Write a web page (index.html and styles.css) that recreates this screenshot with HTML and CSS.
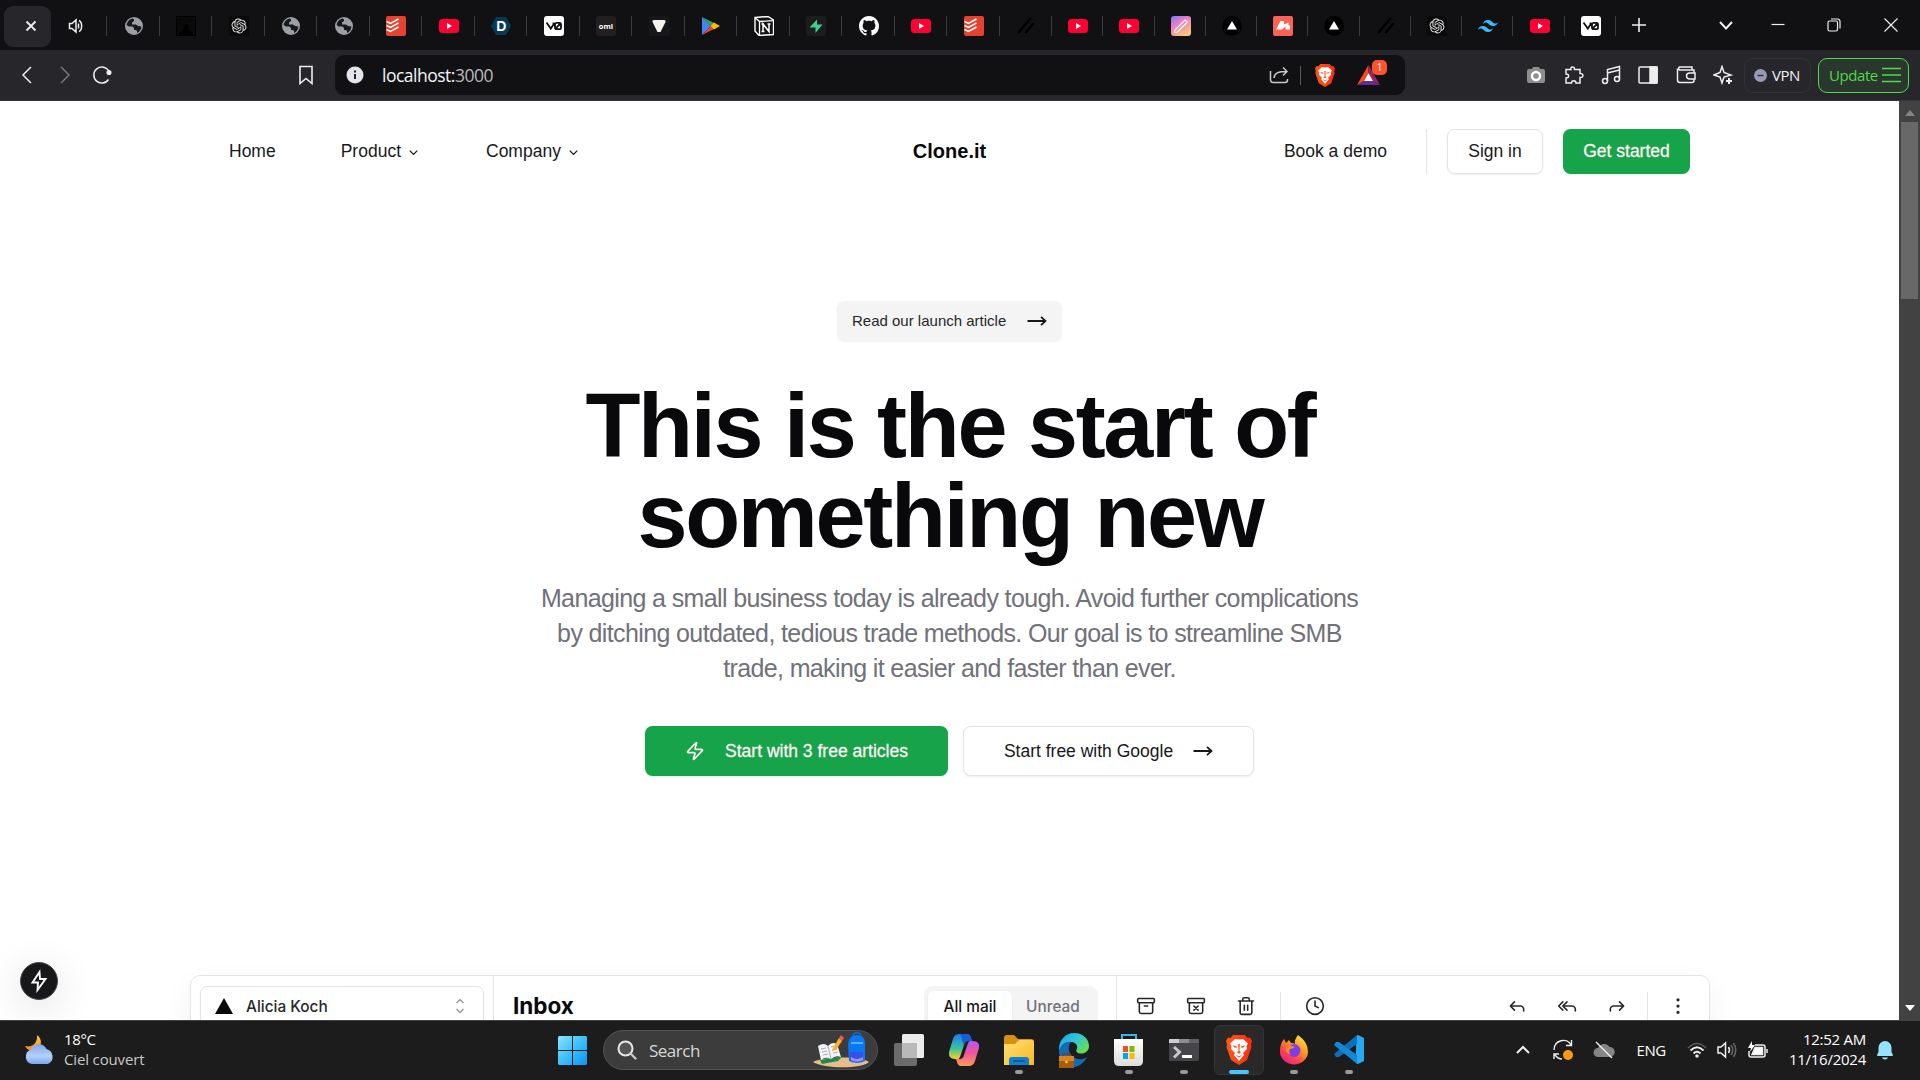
FILE: index.html
```html
<!DOCTYPE html>
<html lang="en">
<head>
<meta charset="utf-8">
<title>Clone.it</title>
<link rel="stylesheet" href="styles.css">
</head>
<body>
<svg class="sprite" width="0" height="0" aria-hidden="true">
  <defs>
    <linearGradient id="g-pen" x1="0" y1="0" x2=".6" y2="1"><stop offset="0" stop-color="#7a7bff"/><stop offset=".45" stop-color="#ef7fc0"/><stop offset="1" stop-color="#fdc27c"/></linearGradient>
    <linearGradient id="g-brave" x1="0" x2="1"><stop offset="0" stop-color="#ff5a12"/><stop offset="1" stop-color="#ff2a10"/></linearGradient>
    <linearGradient id="g-win" x1="0" y1="0" x2="1" y2="1"><stop offset="0" stop-color="#8be3ff"/><stop offset=".5" stop-color="#3cc0fb"/><stop offset="1" stop-color="#0a93f5"/></linearGradient>
    <linearGradient id="g-folder" x1="0" y1="0" x2="1" y2="1"><stop offset="0" stop-color="#ffe07a"/><stop offset="1" stop-color="#fcb81c"/></linearGradient>
    <linearGradient id="g-edge" x1="0" y1="0" x2="1" y2=".7"><stop offset="0" stop-color="#1d9ee0"/><stop offset=".5" stop-color="#2fc4df"/><stop offset="1" stop-color="#68e04a"/></linearGradient>
    <linearGradient id="g-cop1" x1="0" y1="0" x2="0" y2="1"><stop offset="0" stop-color="#1c7df0"/><stop offset=".55" stop-color="#35bfa5"/><stop offset="1" stop-color="#f5d523"/></linearGradient>
    <linearGradient id="g-cop2" x1="0" y1="0" x2="0" y2="1"><stop offset="0" stop-color="#b059ef"/><stop offset=".5" stop-color="#f2569a"/><stop offset="1" stop-color="#ff9b55"/></linearGradient>
    <linearGradient id="g-fox" x1=".9" y1="0" x2=".2" y2="1"><stop offset="0" stop-color="#fff04a"/><stop offset=".4" stop-color="#ff9a20"/><stop offset=".75" stop-color="#ff3b55"/><stop offset="1" stop-color="#e0208c"/></linearGradient>
    <linearGradient id="g-cloud" x1="0" y1="0" x2="0" y2="1"><stop offset="0" stop-color="#7fa6ee"/><stop offset=".6" stop-color="#b5d0fb"/><stop offset="1" stop-color="#7ba6ef"/></linearGradient>
    <linearGradient id="g-moon" x1="0" y1="0" x2="0" y2="1"><stop offset="0" stop-color="#ffcf3a"/><stop offset="1" stop-color="#ef8a1e"/></linearGradient>
    <linearGradient id="g-store" x1="0" y1="0" x2="0" y2="1"><stop offset="0" stop-color="#fff"/><stop offset="1" stop-color="#dcdcdc"/></linearGradient>
  </defs>
  <symbol id="globe" viewBox="0 0 20 20"><circle cx="10" cy="10" r="9" fill="#9aa0a6"/><path d="M9 2.600C5.600 3 3 5.700 2.700 9.200L5 10.500H8.500L10 12V14H12L13 15V17C15.500 16 17.300 13.500 17.400 10.500L14 10L12 8.500H8V6.500L10 5V3.500Z" fill="#17181b"/><path d="M11 3.500V6L9.500 7.500H13L15 9H17" fill="#9aa0a6"/></symbol>
  <symbol id="openai" viewBox="0 0 24 24"><rect width="24" height="24" rx="3" fill="#0a0a0a"/><g transform="translate(3 3) scale(.75)"><path fill="#e8e8e8" d="M22.2819 9.8211a5.9847 5.9847 0 0 0-.5157-4.9108 6.0462 6.0462 0 0 0-6.5098-2.9A6.0651 6.0651 0 0 0 4.9807 4.1818a5.9847 5.9847 0 0 0-3.9977 2.9 6.0462 6.0462 0 0 0 .7427 7.0966 5.98 5.98 0 0 0 .511 4.9107 6.051 6.051 0 0 0 6.5146 2.9001A5.9847 5.9847 0 0 0 13.2599 24a6.0557 6.0557 0 0 0 5.7718-4.2058 5.9894 5.9894 0 0 0 3.9977-2.9001 6.0557 6.0557 0 0 0-.7475-7.0729zm-9.022 12.6081a4.4755 4.4755 0 0 1-2.8764-1.0408l.1419-.0804 4.7783-2.7582a.7948.7948 0 0 0 .3927-.6813v-6.7369l2.02 1.1686a.071.071 0 0 1 .038.052v5.5826a4.504 4.504 0 0 1-4.4945 4.4944zm-9.6607-4.1254a4.4708 4.4708 0 0 1-.5346-3.0137l.142.0852 4.783 2.7582a.7712.7712 0 0 0 .7806 0l5.8428-3.3685v2.3324a.0804.0804 0 0 1-.0332.0615L9.74 19.9502a4.4992 4.4992 0 0 1-6.1408-1.6464zM2.3408 7.8956a4.485 4.485 0 0 1 2.3655-1.9728V11.6a.7664.7664 0 0 0 .3879.6765l5.8144 3.3543-2.0201 1.1685a.0757.0757 0 0 1-.071 0l-4.8303-2.7865A4.504 4.504 0 0 1 2.3408 7.872zm16.5963 3.8558L13.1038 8.364 15.1192 7.2a.0757.0757 0 0 1 .071 0l4.8303 2.7913a4.4944 4.4944 0 0 1-.6765 8.1042v-5.6772a.79.79 0 0 0-.407-.667zm2.0107-3.0231l-.142-.0852-4.7735-2.7818a.7759.7759 0 0 0-.7854 0L9.409 9.2297V6.8974a.0662.0662 0 0 1 .0284-.0615l4.8303-2.7866a4.4992 4.4992 0 0 1 6.6802 4.66zM8.3065 12.863l-2.02-1.1638a.0804.0804 0 0 1-.038-.0567V6.0742a4.4992 4.4992 0 0 1 7.3757-3.4537l-.142.0805L8.704 5.459a.7948.7948 0 0 0-.3927.6813zm1.0976-2.3654l2.602-1.4998 2.6069 1.4998v2.9994l-2.5974 1.4997-2.6067-1.4997Z"/></g></symbol>
  <symbol id="todoist" viewBox="0 0 20 20"><rect width="20" height="20" rx="2" fill="#e44332"/><path d="M0 6.500L4 8.500L12 4M0 10.500L4 12.500L12 8M0 14.500L4 16.500L12 12" transform="translate(.5 -1)" fill="none" stroke="#fff" stroke-width="1.500"/></symbol>
  <symbol id="youtube" viewBox="0 0 20 20"><rect y="3" width="20" height="14" rx="3.500" fill="#ff0033"/><path d="M8 7V13L13 10Z" fill="#fff"/></symbol>
  <symbol id="v0" viewBox="0 0 20 20"><rect width="20" height="20" rx="3" fill="#fff"/><path d="M2.500 6.500L6.800 12.600L9.500 8.500V6.500M12 6.800H15.500A1.500 1.500 0 0 1 17 8.300V11.700A1.500 1.500 0 0 1 15.500 13.200H12.500A1.500 1.500 0 0 1 11 11.700V8.300A1.500 1.500 0 0 1 12.500 6.800M11.300 12.800L16.700 7.200" fill="none" stroke="#111" stroke-width="1.800"/></symbol>
  <symbol id="vercel" viewBox="0 0 20 20"><circle cx="10" cy="10" r="10" fill="#000"/><path d="M10 5L15 13.500H5Z" fill="#fff"/></symbol>
  <symbol id="slashes" viewBox="0 0 20 20"><path d="M3 16L14 3M10 16L17 8" stroke="#000" stroke-width="2.500" stroke-linecap="round"/></symbol>
  <symbol id="brave" viewBox="0 0 26 30"><path d="M7 0H19L21.500 3L24 2.500L26 6L25 9L25.500 12L21 25L13 30L5 25L.5 12L1 9L0 6L2 2.500L4.500 3Z" fill="url(#g-brave)"/><path d="M13 4.500L17 4L22 8.500L20.500 11L21 14L17 18L18 20L13 26L8 20L9 18L5 14L5.500 11L4 8.500L9 4Z" fill="#fff"/><path d="M7 10.300L11 11.500L10.700 12.800L8 12.200ZM19 10.300L15 11.500L15.300 12.800L18 12.200ZM12.200 9H13.800L13.500 16L15 17.500L13 18.700L11 17.500L12.500 16ZM9.500 20L13 21.300L16.500 20L13 22.500Z" fill="#ff4a18"/></symbol>
  <symbol id="zap" viewBox="0 0 24 24"><path d="M4 14a1 1 0 0 1-.78-1.63l9.900-10.200a.5.5 0 0 1 .86.46l-1.920 6.020A1 1 0 0 0 13 10h7a1 1 0 0 1 .78 1.630l-9.900 10.200a.5.5 0 0 1-.86-.46l1.920-6.020A1 1 0 0 0 11 14z"/></symbol>
  <symbol id="chev" viewBox="0 0 24 24"><path d="m6 9 6 6 6-6"/></symbol>
  <symbol id="arrow" viewBox="0 0 20 12"><path d="M.5 6H18.500M14 1.800L18.500 6L14 10.200"/></symbol>
</svg>

<header class="browser">
  <div class="tabs">
    <div class="tab-active"><svg width="12" height="12" viewBox="0 0 12 12" class="ln"><path d="M1.500 1.500L10.500 10.500M10.500 1.500L1.500 10.500" stroke-width="1.800"/></svg></div>
    <div class="tab-audio"><svg width="16" height="16" viewBox="0 0 16 16" class="ln"><path d="M1.500 5.500H4L8 2V14L4 10.500H1.500ZM10.500 5.500V10.500M11 2.500C14.500 4 14.500 12 11 13.500" stroke-width="1.500"/></svg></div>
    <div class="tab"><svg><use href="#globe"/></svg></div>
    <div class="tab"><svg viewBox="0 0 20 20"><rect width="20" height="20" fill="#0a0a0a"/><path d="M3 16C8 16 8 8 10 8S12 16 17 16V19H3Z" fill="#000"/><path d="M.5.5H19.500V19.500H.5Z" fill="none" stroke="#000"/><text x="2" y="6" font-size="6" fill="#000">n→∞</text></svg></div>
    <div class="tab"><svg><use href="#openai"/></svg></div>
    <div class="tab"><svg><use href="#globe"/></svg></div>
    <div class="tab"><svg><use href="#globe"/></svg></div>
    <div class="tab"><svg><use href="#todoist"/></svg></div>
    <div class="tab"><svg><use href="#youtube"/></svg></div>
    <div class="tab"><svg viewBox="0 0 20 20"><path d="M5 1H15L20 10L15 19H5L0 10Z" fill="#053a52"/><text x="10.200" y="15" text-anchor="middle" class="fav-d">D</text></svg></div>
    <div class="tab"><svg><use href="#v0"/></svg></div>
    <div class="tab"><svg viewBox="0 0 20 20"><rect width="20" height="20" rx="3" fill="#231f20"/><text x="10" y="12.500" text-anchor="middle" class="fav-omi">omi</text></svg></div>
    <div class="tab"><svg viewBox="0 0 20 20"><rect width="20" height="20" fill="#15171a"/><path d="M5 4H15Q17 4 16.500 6L11.500 16H8.500L3.500 6Q3 4 5 4Z" fill="#f7f3ee"/></svg></div>
    <div class="tab"><svg viewBox="0 0 20 20"><path d="M1 1L10 10L1 19Z" fill="#4285f4"/><path d="M1 1L13 7L10 10Z" fill="#34a853"/><path d="M1 19L13 13L10 10Z" fill="#ea4335"/><path d="M13 6.500L19 10L13 13.500L9.500 10Z" fill="#fbbc04"/></svg></div>
    <div class="tab"><svg viewBox="0 0 20 20"><path d="M1 1.500L14 .5L19.500 4V18.500L5 19.500L1 15Z" fill="#111" stroke="#fff" stroke-width="1.400"/><path d="M1.500 2L5.500 5.500L19 4.700M5.500 5.500V19" stroke="#fff" fill="none" stroke-width="1.300"/><path d="M9 15.500V8L15 15.500V8M7.500 8H10M7.500 15.500H10.500M13.500 8H16.500" stroke="#fff" stroke-width="1.500" fill="none"/></svg></div>
    <div class="tab"><svg viewBox="0 0 20 20"><rect width="20" height="20" rx="2" fill="#1c1c1c"/><path d="M11 3.500V8.500H16.500L9.500 17V11.500H3.500Z" fill="#3ecf8e"/></svg></div>
    <div class="tab"><svg viewBox="0 0 16 16"><path fill="#fff" d="M8 0C3.580 0 0 3.580 0 8c0 3.540 2.290 6.530 5.470 7.590.4.070.55-.17.55-.38 0-.19-.01-.82-.01-1.490-2.010.37-2.530-.49-2.690-.94-.09-.23-.48-.94-.82-1.130-.28-.15-.68-.52-.01-.53.63-.01 1.080.58 1.230.82.72 1.210 1.870.87 2.330.66.070-.52.28-.87.51-1.070-1.780-.2-3.640-.89-3.640-3.950 0-.87.31-1.590.82-2.150-.08-.2-.36-1.020.08-2.120 0 0 .67-.21 2.200.82.64-.18 1.320-.27 2-.27s1.360.09 2 .27c1.530-1.040 2.200-.82 2.200-.82.44 1.100.16 1.920.08 2.120.51.56.82 1.270.82 2.150 0 3.070-1.870 3.750-3.650 3.950.29.25.54.73.54 1.480 0 1.070-.01 1.930-.01 2.200 0 .21.15.46.55.38A8.010 8.010 0 0 0 16 8c0-4.420-3.580-8-8-8z"/></svg></div>
    <div class="tab"><svg><use href="#youtube"/></svg></div>
    <div class="tab"><svg><use href="#todoist"/></svg></div>
    <div class="tab"><svg><use href="#slashes"/></svg></div>
    <div class="tab tab-sm"><svg><use href="#youtube"/></svg></div>
    <div class="tab tab-sm"><svg><use href="#youtube"/></svg></div>
    <div class="tab tab-sm"><svg viewBox="0 0 20 20"><rect width="20" height="20" rx="3" fill="url(#g-pen)"/><path d="M4 14L14 4L16.500 6L6 16.500L3.500 16Z" fill="none" stroke="#fff" stroke-width="1.100"/></svg></div>
    <div class="tab tab-sm"><svg><use href="#vercel"/></svg></div>
    <div class="tab tab-sm"><svg viewBox="0 0 20 20"><rect width="20" height="20" rx="2" fill="#fd6156"/><path d="M3 13.500L7.500 5H11V8.500L15.500 6.500V9.500H17V13.500H12.500V10.500L9 13.500Z" fill="#fff"/></svg></div>
    <div class="tab tab-sm"><svg><use href="#vercel"/></svg></div>
    <div class="tab tab-sm"><svg><use href="#slashes"/></svg></div>
    <div class="tab tab-sm"><svg><use href="#openai"/></svg></div>
    <div class="tab tab-sm"><svg viewBox="0 0 24 24"><path fill="#38bdf8" d="M12.001,4.800c-3.200,0-5.200,1.600-6,4.800c1.200-1.600,2.600-2.200,4.200-1.800c0.913,0.228,1.565,0.890,2.288,1.624C13.666,10.618,15.027,12,18.001,12c3.200,0,5.200-1.600,6-4.800c-1.200,1.600-2.600,2.200-4.200,1.800c-0.913-0.228-1.565-0.890-2.288-1.624C16.337,6.182,14.976,4.800,12.001,4.800z M6.001,12c-3.200,0-5.200,1.600-6,4.800c1.200-1.600,2.600-2.200,4.200-1.800c0.913,0.228,1.565,0.890,2.288,1.624c1.177,1.194,2.538,2.576,5.512,2.576c3.200,0,5.200-1.600,6-4.800c-1.200,1.600-2.600,2.200-4.200,1.800c-0.913-0.228-1.565-0.890-2.288-1.624C10.337,13.382,8.976,12,6.001,12z"/></svg></div>
    <div class="tab tab-sm"><svg><use href="#youtube"/></svg></div>
    <div class="tab tab-sm"><svg><use href="#v0"/></svg></div>
    <div class="tab-new"><svg width="14" height="14" viewBox="0 0 14 14" class="ln"><path d="M7 0V14M0 7H14" stroke-width="1.600"/></svg></div>
    <div class="win-controls">
      <svg width="14" height="14" viewBox="0 0 14 14" class="ln"><path d="M1 4L7 10.500L13 4" stroke-width="2"/></svg>
      <svg width="14" height="14" viewBox="0 0 14 14" class="ln minimize"><path d="M.5 6.500H13.500" stroke-width="1.200"/></svg>
      <svg width="14" height="14" viewBox="0 0 14 14" class="ln restore"><path d="M1 4.500A1.500 1.500 0 0 1 2.500 3H9A1.500 1.500 0 0 1 10.500 4.500V11.500A1.500 1.500 0 0 1 9 13H2.500A1.500 1.500 0 0 1 1 11.500ZM4 1H10.500A2.500 2.500 0 0 1 13 3.500V10.500" stroke-width="1.200"/></svg>
      <svg width="14" height="14" viewBox="0 0 14 14" class="ln close"><path d="M.5.5L13.500 13.500M13.500.5L.5 13.500" stroke-width="1.200"/></svg>
    </div>
  </div>
  <div class="toolbar">
    <div class="nav-buttons">
      <svg width="20" height="20" viewBox="0 0 20 20" class="ln"><path d="M14 2L6 10L14 18"/></svg>
      <svg width="20" height="20" viewBox="0 0 20 20" class="ln dim"><path d="M6 2L14 10L6 18"/></svg>
      <svg width="20" height="20" viewBox="0 0 20 20" class="ln"><path d="M16.500 14.500A8 8 0 1 1 17 6.500"/><circle cx="17" cy="7.500" r="1.800" fill="#eee"/></svg>
    </div>
    <svg class="bookmark ln" width="20" height="20" viewBox="0 0 20 20"><path d="M4 1.500H16V18.500L10 13.500L4 18.500Z" stroke-width="1.600"/></svg>
    <div class="address">
      <svg width="18" height="18" viewBox="0 0 18 18"><circle cx="9" cy="9" r="8.500" fill="#e4e4ec"/><path d="M9 8V13M9 4.500V6.500" stroke="#222" stroke-width="2"/></svg>
      <span class="url">localhost:<span>3000</span></span>
      <svg class="share ln" width="20" height="20" viewBox="0 0 20 20"><path d="M1.500 6V15A2.500 2.500 0 0 0 4 17.500H16A2.500 2.500 0 0 0 18.500 15V14M5 13C5.500 8 9 6.500 18 6.500M14 2.500L18 6.500L14 10.500" stroke-width="1.500" stroke="#c9c9cd"/></svg>
      <i class="bar"></i>
      <svg class="shield" width="20" height="23"><use href="#brave"/></svg>
      <div class="bat"><svg width="23" height="20" viewBox="0 0 23 20"><path d="M11.500 0L0 20L7 16L11.500 8Z" fill="#ff4a1c"/><path d="M11.500 0L23 20L16 16L11.500 8Z" fill="#9e1f63"/><path d="M0 20H23L16 16H7Z" fill="#662d91"/><path d="M11.500 8L16 16H7Z" fill="#fff"/></svg><b>1</b></div>
    </div>
    <div class="extensions">
      <svg viewBox="0 0 20 20"><path d="M6 4L7 2H13L14 4H17A2 2 0 0 1 19 6V16A2 2 0 0 1 17 18H3A2 2 0 0 1 1 16V6A2 2 0 0 1 3 4Z" fill="#8e8e90"/><circle cx="10" cy="11" r="4" fill="none" stroke="#fff" stroke-width="2.400"/></svg>
      <svg viewBox="0 0 20 20" class="ln"><path d="M2 4.500H7C6 1 11 1 10.500 4.500H16V8.500C20 8 20 13 16 12.500V18H12C12 15 7.500 15 7.500 18H2V13C5.500 13 5.500 9 2 9Z"/></svg>
      <svg viewBox="0 0 20 20" class="ln"><path d="M6.500 16V4.500L18.500 1.500V14M6.500 8L18.500 5"/><circle cx="4" cy="16" r="2.500"/><circle cx="16" cy="14" r="2.500"/></svg>
      <svg viewBox="0 0 20 20" class="ln"><rect x="1" y="2" width="18" height="16" rx="1"/><path d="M12 2H19V18H12Z" fill="#eee"/></svg>
      <svg viewBox="0 0 20 20" class="ln"><path d="M18 8V5H3.500A1.700 1.700 0 0 1 3.500 2H16V5M1.500 3.500V15A2.500 2.500 0 0 0 4 17.500H16A2 2 0 0 0 18 15.500V14M19 8H13.500A3 3 0 0 0 13.500 14H19Z"/></svg>
      <svg viewBox="0 0 20 20" class="ln"><path d="M9 1.500L11 7.500L18 10L11 12L9 18L7 12L1 10L7 7.500Z"/><path d="M16 13V19M13 16H19" stroke-width="2"/></svg>
    </div>
    <div class="vpn"><svg width="13" height="13" viewBox="0 0 13 13"><circle cx="6.500" cy="6.500" r="6.500" fill="#9a9ab5"/><path d="M3.500 6.500H9.500" stroke="#33333c" stroke-width="1.500"/></svg>VPN</div>
    <div class="update">Update<svg width="19" height="16" viewBox="0 0 19 16"><path d="M0 1.500H19M0 8H19M0 14.500H19" stroke="#50d94c" stroke-width="1.500"/></svg></div>
  </div>
</header>

<div class="viewport">
<main class="page">
  <nav class="site-nav">
    <div class="nav-left">
      <span>Home</span>
      <span>Product<svg class="chev"><use href="#chev"/></svg></span>
      <span>Company<svg class="chev"><use href="#chev"/></svg></span>
    </div>
    <strong class="logo">Clone.it</strong>
    <div class="nav-right">
      <span class="demo">Book a demo</span>
      <i class="vr"></i>
      <a class="btn outline">Sign in</a>
      <a class="btn primary">Get started</a>
    </div>
  </nav>

  <section class="hero">
    <a class="launch">Read our launch article<svg class="arrow"><use href="#arrow"/></svg></a>
    <h1>This is the start of<br>something new</h1>
    <p>Managing a small business today is already tough. Avoid further complications<br>by ditching outdated, tedious trade methods. Our goal is to streamline SMB<br>trade, making it easier and faster than ever.</p>
    <div class="cta">
      <a class="btn primary big start"><svg class="zap"><use href="#zap"/></svg>Start with 3 free articles</a>
      <a class="btn outline big google">Start free with Google<svg class="arrow"><use href="#arrow"/></svg></a>
    </div>
  </section>

  <section class="mail">
    <div class="mail-side">
      <div class="account"><svg width="18" height="16" viewBox="0 0 18 16"><path d="M9 0L18 16H0Z" fill="#09090b"/></svg><span>Alicia Koch</span><svg class="updown" width="12" height="16" viewBox="0 0 12 16"><path d="M2.500 5L6 1.500L9.500 5M2.500 11L6 14.500L9.500 11" fill="none" stroke="#8b8b8f" stroke-width="1.200"/></svg></div>
    </div>
    <div class="mail-list">
      <b>Inbox</b>
      <div class="segments"><span class="on">All mail</span><span>Unread</span></div>
    </div>
    <div class="mail-tools">
      <svg viewBox="0 0 24 24"><rect width="20" height="5" x="2" y="3" rx="1"/><path d="M4 8v11a2 2 0 0 0 2 2h12a2 2 0 0 0 2-2V8M10 12h4"/></svg>
      <svg viewBox="0 0 24 24"><rect width="20" height="5" x="2" y="3" rx="1"/><path d="M4 8v11a2 2 0 0 0 2 2h12a2 2 0 0 0 2-2V8m-10.500 9 5-5m-5 0 5 5"/></svg>
      <svg viewBox="0 0 24 24"><path d="M3 6h18M19 6v14a2 2 0 0 1-2 2H7a2 2 0 0 1-2-2V6M8 6V4a2 2 0 0 1 2-2h4a2 2 0 0 1 2 2v2M10 11v6M14 11v6"/></svg>
      <i class="tool-vr"></i>
      <svg viewBox="0 0 24 24"><circle cx="12" cy="12" r="10"/><path d="M12 6v6l4 2"/></svg>
      <span class="fill"></span>
      <svg viewBox="0 0 24 24"><path d="m9 17-5-5 5-5M20 18v-2a4 4 0 0 0-4-4H4"/></svg>
      <svg viewBox="0 0 24 24"><path d="m7 17-5-5 5-5M12 17l-5-5 5-5M22 18v-2a4 4 0 0 0-4-4H7"/></svg>
      <svg viewBox="0 0 24 24"><path d="m15 17 5-5-5-5M4 18v-2a4 4 0 0 1 4-4h12"/></svg>
      <i class="tool-vr tight"></i>
      <svg class="dots" viewBox="0 0 24 24"><circle cx="12" cy="12" r="1"/><circle cx="12" cy="4.500" r="1"/><circle cx="12" cy="19.500" r="1"/></svg>
    </div>
  </section>
  <div class="dev-badge"><svg width="24" height="24" viewBox="0 0 24 24"><path d="M12.500 3L5.500 13.500H11L10.500 21L18.500 10H13Z" fill="none" stroke="#fff" stroke-width="1.900"/></svg></div>
</main>
<aside class="scrollbar">
  <svg width="10" height="6" viewBox="0 0 10 6"><path d="M5 0L10 6H0Z" fill="#858585"/></svg>
  <i class="thumb"></i>
  <svg width="10" height="6" viewBox="0 0 10 6"><path d="M5 6L10 0H0Z" fill="#fff"/></svg>
</aside>
</div>

<footer class="taskbar">
  <div class="weather">
    <svg width="32" height="32" viewBox="0 0 32 32"><path d="M13 1C19 5 18 14 11 17C7 18 3 16 1 12C9 14 14 8 13 1Z" fill="url(#g-moon)"/><path d="M8 30A7.500 7.500 0 0 1 7 15.500A8.500 8.500 0 0 1 22.500 15A8 8 0 0 1 24 30Z" fill="url(#g-cloud)"/></svg>
    <div><span>18°C</span><span class="soft">Ciel couvert</span></div>
  </div>
  <svg class="start-logo" width="29" height="29" viewBox="0 0 29 29"><path d="M1 0H14V14H0V1ZM15 0H28L29 1V14H15ZM0 15H14V29H1L0 28ZM15 15H29V28L28 29H15Z" fill="url(#g-win)"/></svg>
  <div class="search">
    <svg width="20" height="20" viewBox="0 0 20 20"><circle cx="8.500" cy="8.500" r="7" fill="#555" stroke="#e8e8e8" stroke-width="2"/><path d="M13.500 13.500L18.500 18.500" stroke="#c8c8c8" stroke-width="2.400" stroke-linecap="round"/></svg>
    <span>Search</span>
    <svg class="school" width="58" height="36" viewBox="0 0 58 36"><path d="M1 30C8 25 48 23 57 30C50 37 12 37 1 30Z" fill="#e8bd8b"/><path d="M8 28L27 25L29 26L26 29L10 32Z" fill="#1f8a4e"/><path d="M6 14Q12 10 16 14Q20 9 25 12L29 25Q23 23 19 27Q14 24 9 28Z" fill="#f3f3f8"/><path d="M16 14L19 27M9 17L14 16M10 20L15 19M11 23L16 22M19 15L24 14M20 18L25 17M21 21L26 20" stroke="#a9a9bd"/><path d="M21 16L27 6L30 9L24 18L20 19Z" fill="#ffb02a"/><path d="M27 6L29 3L32 6L30 9Z" fill="#f05a5a"/><path d="M36 12Q37 3 45 3Q53 3 53 12V29Q45 33 37 29Z" fill="#0a78f5"/><path d="M41 4Q41 .8 45 .8T49 4" fill="none" stroke="#0a6be0" stroke-width="1.500"/><path d="M38 20H51V28Q45 31 38 28Z" fill="#3252e8"/><path d="M39 11H51" stroke="#55b2ff" stroke-width="2"/><path d="M39 25Q45 29 51 25V28Q45 31 39 28Z" fill="#b28cff"/></svg>
  </div>
  <div class="apps">
    <div class="app"><svg width="30" height="34" viewBox="0 0 30 34"><rect y="10" width="23" height="23" rx="2" fill="#6b6b6b"/><rect x="8" y="1" width="22" height="24" rx="1.500" fill="#ececec"/><path d="M8 10H23V25H8Z" fill="#b9b9b9"/></svg></div>
    <div class="app"><svg width="32" height="32" viewBox="0 0 32 32"><path d="M10 0H19Q22 0 23 4L24 7H20Q17 7 16 11L12 23Q11 26 7 25Q0 25 1 18L5 5Q6 1 10 0Z" fill="url(#g-cop1)"/><path d="M22 32H13Q10 32 9 28L8 25H12Q15 25 16 21L20 9Q21 6 25 7Q32 7 31 14L27 27Q26 31 22 32Z" fill="url(#g-cop2)"/><path d="M19 0Q22 0 23 4L24 7H20Q17 7 16 11L14 6Q14 1 10 0Z" fill="#155fd6"/></svg></div>
    <div class="app run"><svg width="30" height="32" viewBox="0 0 30 32"><path d="M0 4Q0 1 3 1H10L14 5H27Q30 5 30 8V18H0Z" fill="#d98f10"/><path d="M0 10H11L15 6H28Q30 6 30 8V31H0Z" fill="url(#g-folder)"/><path d="M5 31V26Q5 23 8 23H22Q25 23 25 26V31Z" fill="#0f7fd0"/><path d="M9 27H21" stroke="#0a4f93" stroke-width="1.500"/></svg></div>
    <div class="app"><svg width="32" height="36" viewBox="0 0 32 36"><path d="M1 18A15 16 0 0 1 16 1C25 1 31 7 31 14C31 20 25 23 20 21Q17 19 19 17C20 14 18 10 13 10C7 10 2 14 1 20Z" fill="url(#g-edge)"/><path d="M1 20C2 13 7 9 13 10C10 13 9 22 17 26Q23 29 29 25C25 33 18 36 13 35C5 32 1 26 1 20Z" fill="#126bb8"/><path d="M1 24H16V36H1Z" fill="#a85c0f"/><path d="M1 24H16V29H1Z" fill="#d9851d"/><path d="M5 24V22H12V24" fill="none" stroke="#7a420c" stroke-width="1.500"/><circle cx="8.500" cy="30" r="1.300" fill="#ffd45c"/></svg></div>
    <div class="app run"><svg width="30" height="34" viewBox="0 0 30 34"><path d="M8 7V2H22V7" fill="none" stroke="#35b7ec" stroke-width="2"/><path d="M0 6H29V28Q29 33 24 33H5Q0 33 0 28Z" fill="url(#g-store)"/><path d="M9 13H14V19H9Z" fill="#f25022"/><path d="M15.500 13H20.500V19H15.500Z" fill="#7fba00"/><path d="M9 20H14V26H9Z" fill="#00a4ef"/><path d="M15.500 20H20.500V26H15.500Z" fill="#ffb900"/></svg></div>
    <div class="app run"><svg width="30" height="24" viewBox="0 0 30 24"><rect y="1" width="30" height="22" rx="1.500" fill="#46464a"/><path d="M0 5V2Q0 1 1 1H10V5Z" fill="#cfcfcf"/><path d="M10 1H20V5H10Z" fill="#8d8d8d"/><path d="M20 1H30V5H20Z" fill="#626262"/><path d="M5 9L10.500 14L5 19.500" fill="none" stroke="#c9c9c9" stroke-width="3"/><path d="M13 18.500H23" stroke="#fff" stroke-width="3"/></svg></div>
    <div class="app run current"><svg width="26" height="30"><use href="#brave"/></svg></div>
    <div class="app run"><svg width="30" height="30" viewBox="0 0 30 30"><path d="M19 0Q29 7 29 17A14 13 0 0 1 1 16Q1 9 5 4L7 8L10 5L12 8Q15 8 16 9Q15 5 19 0Z" fill="url(#g-fox)"/><circle cx="15" cy="15.500" r="6.500" fill="#7a3fe8"/><path d="M7 12Q11 9 16 12Q13 14 11 14Q9 17 12 20Q6 18 7 12Z" fill="#ff8a1f"/></svg></div>
    <div class="app run"><svg width="30" height="32" viewBox="0 0 30 32"><path d="M22 2L24 1L30 4V27L24 30L22 29Z" fill="#28a8f0"/><path d="M23 1V10L5 23L2 23L0 20Z" fill="#0c6fb8"/><path d="M23 30V21L5 8L2 8L0 11Z" fill="#1288d8"/></svg></div>
  </div>
  <div class="tray">
    <svg class="ln" width="14" height="10" viewBox="0 0 14 10"><path d="M1 8L7 2L13 8" stroke-width="2"/></svg>
    <svg class="ln sync" width="22" height="22" viewBox="0 0 22 22"><path d="M2 11C2 1 15-2 19 6M19.500 1V6.500H14M2 20V15H7M3 16Q6 20 10 20" stroke-width="1.400"/><circle cx="16" cy="16" r="5" fill="#ff9a0a" stroke="none"/></svg>
    <svg width="22" height="18" viewBox="0 0 22 18"><path d="M5 16A4.500 4.500 0 0 1 5 7A6.500 6.500 0 0 1 16.500 6A5 5 0 0 1 17 16Z" fill="#858585"/><path d="M3 1L19 17" stroke="#eee" stroke-width="1.500"/></svg>
    <span class="lang">ENG</span>
    <div class="status">
      <svg width="20" height="16" viewBox="0 0 20 16" class="ln"><path d="M1 6Q10-3 19 6" stroke="#5a5a5a"/><path d="M3.500 8.500Q10 2 16.500 8.500M6.500 11.500Q10 8 13.500 11.500" stroke-width="1.800"/><circle cx="10" cy="14" r="1" fill="#fff"/></svg>
      <svg width="20" height="18" viewBox="0 0 20 18" class="ln"><path d="M1 6H4L8.500 2V16L4 12H1ZM11.500 6Q13.500 9 11.500 12"/><path d="M14 4Q17.500 9 14 14M16.500 2Q21 9 16.500 16" stroke="#666"/></svg>
      <svg width="22" height="18" viewBox="0 0 22 18" class="ln"><path d="M8 4H16A2 2 0 0 1 18 6V14A2 2 0 0 1 16 16H4A2 2 0 0 1 2 14V10M20 8V12"/><path d="M8 6.500H15.500V13.500H5Z" fill="#fff"/><path d="M5 0L1 7H4L3 11L8 4H5Z" fill="#fff" stroke="none"/></svg>
    </div>
    <div class="clock"><span>12:52 AM</span><span>11/16/2024</span></div>
    <svg width="18" height="20" viewBox="0 0 18 20"><path d="M9 1A6.500 6.500 0 0 1 15.500 7.500V12L17 15Q17 16 16 16H2Q1 16 1 15L2.500 12V7.500A6.500 6.500 0 0 1 9 1ZM6 17.500H12Q11.500 19.500 9 19.500T6 17.500Z" fill="#96e3ff"/></svg>
  </div>
</footer>
</body>
</html>
```
FILE: styles.css
```css
* { box-sizing: border-box; }
body { margin: 0; width: 1920px; height: 1080px; overflow: hidden; display: flex; flex-direction: column; font-family: "Liberation Sans", Arial, sans-serif; color: #09090b; background: #fff; }
svg { display: block; flex: none; }
.sprite { position: absolute; }
.ln { fill: none; stroke: #eee; stroke-width: 1.5; }
.ln.dim { stroke: #77777c; }

/* Browser chrome */
.browser { height: 101px; flex: none; background: #26262b; font-family: "Open Sans", "Noto Sans", sans-serif; border-bottom: 1px solid #35353d; }
.tabs { height: 50px; background: #111113; display: flex; align-items: center; padding: 2px 0 0 4px; }
.tab-active { width: 47px; height: 41px; background: #26262b; border-radius: 9px; display: flex; align-items: center; justify-content: center; padding-left: 7px; }
.tab-audio, .tab { height: 20px; display: flex; align-items: center; justify-content: center; border-right: 1px solid #3c3c3f; }
.tab-audio { width: 56px; padding-right: 5px; }
.tab { width: 52.5px; padding-left: 2px; }
.tab-sm { width: 51.27px; padding-left: 2px; }
.tab svg { width: 20px; height: 20px; }
.fav-d { font: 700 14px "Liberation Sans", sans-serif; fill: #fff; }
.fav-omi { font: 700 7.5px "Open Sans", sans-serif; fill: #fff; }
.tab-new { width: 46px; display: flex; justify-content: center; padding-bottom: 2px; }
.win-controls { flex: 1; display: flex; padding: 0 22px 2px 57px; }
.minimize { margin-left: 38px; }
.restore { margin-left: 42px; }
.close { margin-left: auto; }
.toolbar { height: 50px; display: flex; align-items: center; padding-right: 11px; }
.nav-buttons { display: flex; gap: 17.5px; padding-left: 17px; }
.bookmark { margin-left: 184px; }
.address { margin-left: 19px; width: 1071px; height: 40px; border-radius: 9px; background: #111113; display: flex; align-items: center; padding-left: 11px; }
.url { margin-left: 18px; font-size: 17.5px; letter-spacing: -0.5px; color: #f4f4f5; line-height: 24px; padding-bottom: 1px; }
.url span { color: #b9b9be; }
.share { margin-left: auto; }
.bar { width: 1.5px; height: 19px; background: #58585d; margin: 0 14px 0 11px; }
.bat { position: relative; margin: 0 25px 0 22px; }
.bat b { position: absolute; left: 15px; top: -5px; width: 15px; height: 15px; border-radius: 5px; background: #fb542b; color: #fff; font-size: 10px; line-height: 15px; text-align: center; font-weight: 400; }
.extensions { display: flex; gap: 17.4px; margin-left: 121px; }
.extensions svg { width: 20px; height: 20px; }
.vpn { margin-left: 11px; width: 67px; height: 35px; border: 1px solid #313137; border-radius: 9px; display: flex; align-items: center; padding-left: 9px; gap: 5px; color: #f0f0f3; font-size: 15px; letter-spacing: -0.5px; }
.update { margin-left: 7px; width: 91px; height: 35px; border: 1.5px solid #50d94c; background: #2a372d; border-radius: 9px; display: flex; align-items: center; justify-content: space-between; padding: 0 7px 0 10px; color: #50d94c; font-size: 15px; letter-spacing: -0.45px; }

/* Page */
.viewport { height: 919px; flex: none; display: flex; }
.page { width: 1899px; position: relative; overflow: hidden; padding-top: 28px; }
.site-nav { height: 45px; margin: 0 209px 0 229px; display: grid; grid-template-columns: 1fr auto 1fr; align-items: center; font-size: 17.5px; color: #18181b; }
.nav-left { display: flex; gap: 65px; padding-bottom: 1px; }
.nav-left span { display: flex; align-items: center; }
.chev { width: 15px; height: 15px; margin: 3px 0 0 5px; fill: none; stroke: #18181b; stroke-width: 2; }
.logo { font-size: 20px; letter-spacing: 0; color: #09090b; transform: translateX(-10px); padding-bottom: 1px; }
.nav-right { display: flex; align-items: center; justify-content: flex-end; }
.vr { width: 1px; height: 45px; background: #e4e4e7; margin: 0 20px 0 39px; }
.btn { display: flex; align-items: center; justify-content: center; height: 45px; border-radius: 7.5px; font-size: 17.5px; box-shadow: 0 1px 2.5px rgba(0,0,0,.07); padding-bottom: 1px; }
.outline { border: 1px solid #e4e4e7; background: #fff; color: #18181b; width: 96px; }
.primary { background: #16a34a; color: #fff1f2; width: 127px; margin-left: 20px; -webkit-text-stroke: .3px #fff1f2; }
.hero { display: flex; flex-direction: column; align-items: center; padding-top: 127px; }
.launch { width: 225px; height: 40px; border-radius: 7.5px; background: #f4f4f5; box-shadow: 0 1px 2.5px rgba(0,0,0,.06); display: flex; align-items: center; justify-content: space-between; padding: 0 15px 1px 15px; font-size: 15px; color: #27272a; }
.arrow { width: 20px; height: 12px; fill: none; stroke: #18181b; stroke-width: 1.8; }
h1 { margin: 40px 0 0; padding-left: 1px; font-size: 90px; line-height: 90px; letter-spacing: -2.3px; text-align: center; color: #09090b; }
.hero p { margin: 20px 0 40px; font-size: 25px; line-height: 35px; letter-spacing: -0.625px; text-align: center; color: #71717a; }
.cta { display: flex; gap: 15px; }
.big { height: 50px; margin: 0; padding-bottom: 0; }
.start { width: 303px; gap: 20px; }
.google { width: 291px; gap: 20px; }
.zap { width: 20px; height: 20px; fill: none; stroke: #fff1f2; stroke-width: 2; }
.mail { margin: 199px 189px 0 190px; height: 100px; border: 1px solid #e4e4e7; border-radius: 10px; box-shadow: 0 12px 30px rgba(0,0,0,.06); display: flex; font-family: Inter, sans-serif; background: #fff; }
.mail-side { width: 303px; border-right: 1px solid #e4e4e7; padding: 10px 9px 0 9px; }
.account { height: 42px; border: 1px solid #e4e4e7; border-radius: 7px; box-shadow: 0 1px 2px rgba(0,0,0,.06); display: flex; align-items: center; padding: 0 17px 2px 14px; font-size: 15.4px; font-weight: 500; color: #27272a; }
.account span { margin-left: 13px; }
.updown { margin-left: auto; }
.mail-list { width: 623px; border-right: 1px solid #e4e4e7; display: flex; justify-content: space-between; padding: 10px 18px 0 19px; }
.mail-list b { font-size: 22.5px; line-height: 40px; font-weight: 700; }
.segments { height: 44px; background: #f4f4f5; border-radius: 9px; padding: 5px 4px; display: flex; font-size: 15.4px; font-weight: 500; color: #71717a; line-height: 31px; }
.segments span { width: 82px; text-align: center; border-radius: 6px; }
.segments .on { background: #fff; color: #18181b; width: 84px; box-shadow: 0 1px 2px rgba(0,0,0,.08); }
.mail-tools { flex: 1; display: flex; align-items: center; height: 60px; padding: 0 21px 0 19px; gap: 30px; }
.mail-tools svg { width: 20px; height: 20px; fill: none; stroke: #27272a; stroke-width: 1.9; stroke-linecap: round; stroke-linejoin: round; }
.mail-tools .dots { fill: #18181b; }
.mail-tools .tool-vr { width: 1px; height: 28px; background: #e4e4e7; margin: 0 -6px; }
.mail-tools .tight { margin: 0 -10px; }
.mail-tools .fill { flex: 1; }
.dev-badge { position: absolute; left: 20px; bottom: 20px; width: 38px; height: 38px; border-radius: 50%; background: #18181a; border: 1px solid #4b4b4d; box-shadow: 0 8px 40px rgba(0,0,0,.14); display: flex; align-items: center; justify-content: center; }
.scrollbar { width: 21px; background: #424242; display: flex; flex-direction: column; align-items: center; padding: 9px 0; }
.thumb { width: 17px; height: 177px; background: #686868; margin: 6px 0 auto; }

/* Taskbar */
.taskbar { height: 60px; flex: none; background: #1c1c1c; border-top: 1px solid #414141; display: flex; align-items: center; padding: 0 26px 1px 0; font-family: "Open Sans", "Noto Sans", sans-serif; color: #fff; font-size: 15px; letter-spacing: -0.35px; }
.weather { width: 558px; padding-left: 24px; display: flex; gap: 8px; align-items: center; }
.weather div, .clock { display: flex; flex-direction: column; line-height: 20px; padding-bottom: 3px; }
.weather .soft { color: #c8c8c8; letter-spacing: -0.15px; }
.search { width: 275px; height: 40px; margin-left: 16px; border-radius: 20px; background: #3c3c3c; border: 1px solid #545454; display: flex; align-items: center; padding: 0 7px 0 13px; font-size: 17px; letter-spacing: -0.5px; color: #d8d8d8; }
.search span { margin-left: 12px; }
.school { margin-left: auto; }
.apps { display: flex; margin-left: 3.5px; }
.app { width: 55px; height: 50px; display: flex; align-items: center; justify-content: center; position: relative; border-radius: 6px; }
.run::after { content: ""; position: absolute; bottom: 1px; left: 23.5px; width: 8px; height: 4px; border-radius: 2px; background: #9a9a9a; }
.current { width: 50px; margin: 0 2.5px; background: #292929; border: 1px solid #343434; }
.current::after { left: 14px; bottom: 0; width: 20px; background: #4cc2ff; }
.tray { margin-left: auto; display: flex; align-items: center; }
.sync { margin: 0 19px 0 22px; }
.lang { margin: 0 21px 1px 22px; font-size: 15px; letter-spacing: -0.4px; }
.status { display: flex; align-items: center; gap: 10px; }
.clock { text-align: right; margin: 0 10px 0 20px; letter-spacing: -0.25px; }
```
